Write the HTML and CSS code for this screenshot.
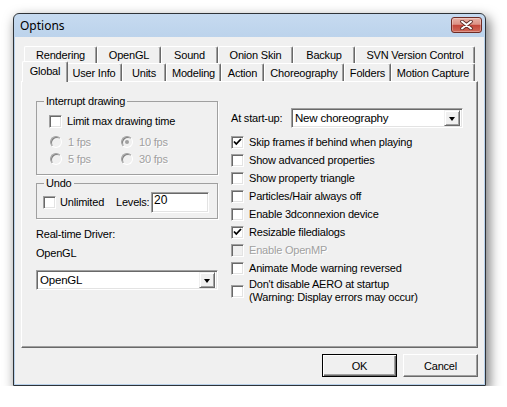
FILE: index.html
```html
<!DOCTYPE html>
<html>
<head>
<meta charset="utf-8">
<title>Options</title>
<link rel="stylesheet" href="styles.css">
</head>
<body>
<div class="window">
  <div class="titlebar">
    <span class="title">Options</span>
    <div class="close">
      <svg width="13" height="10" viewBox="0 0 13 10">
        <path d="M2 1.5 L11 8.5 M11 1.5 L2 8.5" stroke="#5a2a26" stroke-width="3.6" stroke-linecap="round"/>
        <path d="M2 1.5 L11 8.5 M11 1.5 L2 8.5" stroke="#ffffff" stroke-width="2" stroke-linecap="round"/>
      </svg>
    </div>
  </div>
  <div class="client">
    <div class="tabs">
      <div class="tabrow back">
        <div class="tab">Rendering</div>
        <div class="tab">OpenGL</div>
        <div class="tab">Sound</div>
        <div class="tab">Onion Skin</div>
        <div class="tab">Backup</div>
        <div class="tab">SVN Version Control</div>
      </div>
      <div class="tabrow front">
        <div class="tab sel">Global</div>
        <div class="tab">User Info</div>
        <div class="tab">Units</div>
        <div class="tab">Modeling</div>
        <div class="tab">Action</div>
        <div class="tab">Choreography</div>
        <div class="tab">Folders</div>
        <div class="tab">Motion Capture</div>
      </div>
    </div>
    <div class="panel">
      <div class="col-left">
        <fieldset class="group g-interrupt">
          <legend>Interrupt drawing</legend>
          <div class="crow first"><span class="box"></span><span>Limit max drawing time</span></div>
          <div class="radios">
            <div class="ritem"><span class="radio"></span><span class="dis">1 fps</span></div>
            <div class="ritem"><span class="radio on"></span><span class="dis">10 fps</span></div>
            <div class="ritem"><span class="radio"></span><span class="dis">5 fps</span></div>
            <div class="ritem"><span class="radio"></span><span class="dis">30 fps</span></div>
          </div>
        </fieldset>
        <fieldset class="group g-undo">
          <legend>Undo</legend>
          <div class="undo-row">
            <span class="box"></span><span class="unl">Unlimited</span><span class="lev">Levels:</span><div class="edit">20</div>
          </div>
        </fieldset>
        <div class="text driver-lbl">Real-time Driver:</div>
        <div class="text driver-val">OpenGL</div>
        <div class="combo driver"><span class="ctext">OpenGL</span><span class="drop"><span class="tri"></span></span></div>
      </div>
      <div class="col-right">
        <div class="startup">
          <span class="su-lbl">At start-up:</span>
          <div class="combo su"><span class="ctext">New choreography</span><span class="drop"><span class="tri"></span></span></div>
        </div>
        <div class="checks">
          <div class="crow"><span class="box checked"><svg width="11" height="11" viewBox="0 0 11 11"><path d="M2 4.5 L4.3 7 L9 2" fill="none" stroke="#000" stroke-width="1.8"/></svg></span><span>Skip frames if behind when playing</span></div>
          <div class="crow"><span class="box"></span><span>Show advanced properties</span></div>
          <div class="crow"><span class="box"></span><span>Show property triangle</span></div>
          <div class="crow"><span class="box"></span><span>Particles/Hair always off</span></div>
          <div class="crow"><span class="box"></span><span>Enable 3dconnexion device</span></div>
          <div class="crow"><span class="box checked"><svg width="11" height="11" viewBox="0 0 11 11"><path d="M2 4.5 L4.3 7 L9 2" fill="none" stroke="#000" stroke-width="1.8"/></svg></span><span>Resizable filedialogs</span></div>
          <div class="crow"><span class="box disabled"></span><span class="dis">Enable OpenMP</span></div>
          <div class="crow"><span class="box"></span><span>Animate Mode warning reversed</span></div>
          <div class="crow two"><span class="box"></span><span>Don't disable AERO at startup<br>(Warning: Display errors may occur)</span></div>
        </div>
      </div>
    </div>
    <div class="buttons">
      <button class="btn default">OK</button>
      <button class="btn">Cancel</button>
    </div>
  </div>
</div>
</body>
</html>
```
FILE: styles.css
```css
html, body {
  margin: 0;
  padding: 0;
  background: #ffffff;
}
body {
  font-family: "Liberation Sans", Arial, sans-serif;
  font-size: 11px;
  line-height: 13px;
  letter-spacing: -0.2px;
  color: #000;
}
.window {
  margin: 13px 0 0 13px;
  width: 473px;
  height: 373px;
  box-sizing: border-box;
  border: 1px solid #2e3338;
  border-radius: 6px 6px 0 0;
  background: linear-gradient(#c6daf0, #b9d1ea 30px);
  padding: 0 1px 1px;
  display: flex;
  flex-direction: column;
  box-shadow: 3px 5px 12px 1px rgba(0, 0, 0, 0.5);
}
.titlebar {
  height: 23px;
  display: flex;
  justify-content: space-between;
  align-items: flex-start;
}
.title {
  font-family: "Noto Sans", "Open Sans", sans-serif;
  font-size: 12px;
  line-height: 16px;
  letter-spacing: 0;
  margin: 4px 0 0 5px;
  color: #000;
}
.close {
  width: 31px;
  height: 16px;
  box-sizing: border-box;
  margin: 3px 2px 0 0;
  border: 1px solid #6e2b24;
  border-radius: 3px;
  background: linear-gradient(#e9b1a6 0%, #dc9286 45%, #c4463a 52%, #cf6a5a 100%);
  box-shadow: inset 0 0 0 1px rgba(255, 255, 255, 0.3);
  display: flex;
  align-items: center;
  justify-content: center;
}
.client {
  flex: 1;
  background: #f0f0f0;
  padding: 9px 6px 0;
  display: flex;
  flex-direction: column;
}
.tabs {
  margin-left: 3px;
  width: 451px;
}
.tabrow {
  display: flex;
}
.tabrow.back {
  height: 17px;
}
.tabrow.front {
  height: 18px;
}
.tab {
  box-sizing: border-box;
  height: 100%;
  flex: none;
  background: #f0f0f0;
  border-top: 1px solid #fff;
  border-left: 1px solid #fff;
  border-right: 1px solid #696969;
  box-shadow: inset -1px 0 #a0a0a0;
  border-radius: 2px 2px 0 0;
  text-align: center;
  line-height: 14px;
  padding-top: 1px;
  white-space: nowrap;
}
.front .tab {
  padding-top: 2px;
}
.back .tab:nth-child(1) { width: 73px; }
.back .tab:nth-child(2) { width: 64px; }
.back .tab:nth-child(3) { width: 57px; }
.back .tab:nth-child(4) { width: 75px; }
.back .tab:nth-child(5) { width: 62px; }
.back .tab:nth-child(6) { width: 120px; }
.front .tab:nth-child(1) { width: 46px; }
.front .tab:nth-child(2) { width: 56px; }
.front .tab:nth-child(3) { width: 44px; }
.front .tab:nth-child(4) { width: 55px; }
.front .tab:nth-child(5) { width: 43px; }
.front .tab:nth-child(6) { width: 80px; }
.front .tab:nth-child(7) { width: 47px; }
.front .tab:nth-child(8) { width: 84px; }
.front .tab.sel {
  height: 21px;
  margin: -2px -2px -1px;
  position: relative;
  z-index: 1;
  padding-top: 2px;
}
.panel {
  box-sizing: border-box;
  height: 267px;
  border: 1px solid;
  border-color: #fff #696969 #696969 #fff;
  box-shadow: inset -1px -1px #a0a0a0;
  padding: 13px 0 0 14px;
  display: grid;
  grid-template-columns: 182px 1fr;
  column-gap: 13px;
  align-items: start;
}
.group {
  margin: 0;
  padding: 0;
  border: 1px solid #a0a0a0;
  box-shadow: 1px 1px 0 #fff;
  min-width: 0;
}
.group legend {
  padding: 0 2px;
  line-height: 13px;
  background: #f0f0f0;
}
.g-interrupt {
  padding: 5px 0 7px 12px;
}
.g-interrupt legend {
  margin-left: -5px;
}
.g-undo {
  margin-top: 2px;
  padding: 2px 0 5px 6px;
}
.g-undo legend {
  margin-left: 1px;
}
.crow {
  display: flex;
  align-items: center;
  height: 18px;
  gap: 5px;
  white-space: nowrap;
}
.crow.first {
  height: 16px;
}
.box {
  box-sizing: border-box;
  width: 13px;
  height: 13px;
  flex: none;
  border: 1px solid;
  border-color: #a0a0a0 #fff #fff #a0a0a0;
  box-shadow: inset 1px 1px #696969, inset -1px -1px #e3e3e3;
  background: #fff;
  display: flex;
  align-items: center;
  justify-content: center;
}
.box.disabled {
  background: #f0f0f0;
}
.box svg {
  display: block;
}
.dis {
  color: #a0a0a0;
  text-shadow: 1px 1px 0 #fff;
}
.radios {
  display: grid;
  grid-template-columns: 71px 1fr;
  grid-auto-rows: 16px;
  row-gap: 1px;
  margin: 5px 0 0 1px;
}
.ritem {
  display: flex;
  align-items: center;
  gap: 6px;
}
.radio {
  box-sizing: border-box;
  width: 12px;
  height: 12px;
  border-radius: 50%;
  border: 1px solid;
  border-color: #a0a0a0 #fff #fff #a0a0a0;
  box-shadow: inset 1px 1px #808080;
  background: #f0f0f0;
  display: flex;
  align-items: center;
  justify-content: center;
}
.radio.on::after {
  content: "";
  width: 4px;
  height: 4px;
  border-radius: 50%;
  background: #a0a0a0;
}
.undo-row {
  display: flex;
  align-items: center;
  height: 21px;
}
.undo-row .box {
  margin-right: 4px;
}
.unl {
  width: 56px;
}
.lev {
  width: 35px;
}
.edit {
  box-sizing: border-box;
  width: 58px;
  height: 21px;
  border: 1px solid;
  border-color: #a0a0a0 #fff #fff #a0a0a0;
  box-shadow: inset 1px 1px #696969, inset -1px -1px #e3e3e3;
  background: #fff;
  padding: 1px 0 0 2px;
  font-size: 12px;
  letter-spacing: 0;
}
.text {
  line-height: 13px;
}
.driver-lbl {
  margin-top: 9px;
}
.driver-val {
  margin-top: 6px;
}
.combo {
  box-sizing: border-box;
  height: 20px;
  border: 1px solid;
  border-color: #a0a0a0 #fff #fff #a0a0a0;
  box-shadow: inset 1px 1px #696969, inset -1px -1px #e3e3e3;
  background: #fff;
  display: flex;
  align-items: center;
  padding: 0 2px 0 3px;
}
.combo .ctext {
  flex: 1;
  font-size: 11.5px;
  white-space: nowrap;
}
.combo.driver {
  margin-top: 10px;
  width: 182px;
}
.drop {
  box-sizing: border-box;
  width: 16px;
  height: 16px;
  flex: none;
  background: #f0f0f0;
  border: 1px solid;
  border-color: #f0f0f0 #696969 #696969 #f0f0f0;
  box-shadow: inset 1px 1px #fff, inset -1px -1px #a0a0a0;
  display: flex;
  align-items: center;
  justify-content: center;
}
.tri {
  width: 0;
  height: 0;
  border-left: 3.5px solid transparent;
  border-right: 3.5px solid transparent;
  border-top: 4px solid #000;
  margin-top: 1px;
}
.col-right {
  margin-top: 13px;
}
.startup {
  display: flex;
  align-items: center;
  height: 20px;
}
.su-lbl {
  width: 60px;
  flex: none;
}
.combo.su {
  width: 172px;
}
.checks {
  margin-top: 5px;
}
.crow.two {
  height: 26px;
  margin-top: 1px;
}
.buttons {
  display: flex;
  justify-content: flex-end;
  gap: 6px;
  margin-top: 6px;
}
.btn {
  box-sizing: border-box;
  width: 75px;
  height: 23px;
  padding: 0;
  margin: 0;
  font-family: inherit;
  font-size: 11px;
  letter-spacing: -0.2px;
  color: #000;
  background: #f0f0f0;
  border: 1px solid;
  border-color: #fff #696969 #696969 #fff;
  box-shadow: inset -1px -1px #a0a0a0;
}
.btn.default {
  border-color: #000;
  box-shadow: inset 1px 1px #fff, inset -1px -1px #696969, inset -2px -2px #a0a0a0;
}
```
